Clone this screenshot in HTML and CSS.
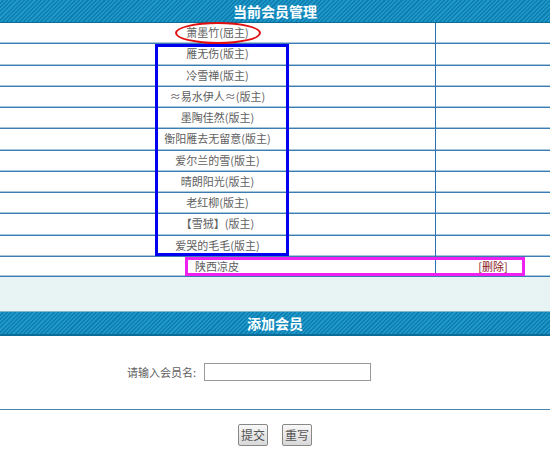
FILE: index.html
```html
<!DOCTYPE html>
<html lang="zh">
<head>
<meta charset="utf-8">
<title>当前会员管理</title>
<link rel="stylesheet" href="styles.css">
</head>
<body>
<div class="page">
  <div class="bar">当前会员管理</div>
  <div class="list">
    <div class="row"><div class="name">萧墨竹(屈主)</div><div class="op"></div></div>
    <div class="row"><div class="name">雁无伤(版主)</div><div class="op"></div></div>
    <div class="row"><div class="name">冷雪禅(版主)</div><div class="op"></div></div>
    <div class="row"><div class="name">≈易水伊人≈(版主)</div><div class="op"></div></div>
    <div class="row"><div class="name">墨陶佳然(版主)</div><div class="op"></div></div>
    <div class="row"><div class="name">衡阳雁去无留意(版主)</div><div class="op"></div></div>
    <div class="row"><div class="name">爱尔兰的雪(版主)</div><div class="op"></div></div>
    <div class="row"><div class="name">晴朗阳光(版主)</div><div class="op"></div></div>
    <div class="row"><div class="name">老红柳(版主)</div><div class="op"></div></div>
    <div class="row"><div class="name">【雪狨】(版主)</div><div class="op"></div></div>
    <div class="row"><div class="name">爱哭的毛毛(版主)</div><div class="op"></div></div>
    <div class="row last"><div class="name left">陕西凉皮</div><div class="op"><span class="del">[删除]</span></div></div>
  </div>
  <div class="spacer"></div>
  <div class="bar bar2">添加会员</div>
  <div class="form">
    <label class="lbl" for="m">请输入会员名:</label>
    <input class="field" id="m" type="text">
  </div>
  <div class="actions">
    <button class="btn" type="button">提交</button>
    <button class="btn" type="button">重写</button>
  </div>

  <div class="mark-red"></div>
  <div class="mark-blue"></div>
  <div class="mark-pink"></div>
</div>
</body>
</html>
```

FILE: styles.css
```css
* { box-sizing: border-box; }
html, body { margin: 0; padding: 0; background: #ffffff; }
body {
  font-family: "Noto Sans CJK SC", "Liberation Sans", sans-serif;
  font-size: 11px;
  color: #606060;
}
.page { position: relative; width: 550px; height: 457px; overflow: hidden; }

.bar {
  height: 23px;
  line-height: 22px;
  text-align: center;
  color: #fff;
  font-weight: bold;
  font-size: 14px;
  background: repeating-linear-gradient(135deg, #1f98c9 0 1.5px, #0d7fb1 1.5px 3px);
  border-bottom: 1px solid #0b6c96;
}
.bar2 {
  height: 25px;
  line-height: 22px;
  border-top: 1px solid #7fb4cc;
  border-bottom: 2px solid #0b6c96;
}

.row {
  display: grid;
  grid-template-columns: 436px 1fr;
  height: 21.25px;
  border-bottom: 1px solid #3b7db3;
  box-shadow: inset 0 -1px 0 #a9c7dc;
}
.row.last { height: 20px; }
.name {
  border-right: 1px solid #2a6fb0;
  text-align: center;
  line-height: 19px;
  white-space: nowrap;
}
.name.left { text-align: left; padding-left: 195px; }
.op { text-align: center; line-height: 19px; }
.del { color: #8a1c1c; font-size: 11px; }

.spacer {
  height: 34px;
  background: #e8f3f3;
}

.form {
  height: 74px;
  display: flex;
  align-items: center;
  padding-left: 127px;
  gap: 8px;
  border-bottom: 1px solid #4a84ad;
}
.lbl { color: #606060; }
.field {
  width: 167px;
  height: 18px;
  border: 1px solid #999;
  background: #fff;
  padding: 0;
}

.actions {
  display: flex;
  justify-content: center;
  gap: 14px;
  padding-top: 14px;
}
.btn {
  width: 30px;
  height: 22px;
  padding: 0;
  font-family: "Noto Sans CJK SC", sans-serif;
  font-size: 12px;
  color: #555;
  border: 1px solid #888;
  border-radius: 2px;
  background: linear-gradient(#f8f8f8, #d8d8d8);
}

.mark-red {
  position: absolute;
  left: 175px; top: 22px;
  width: 86px; height: 22px;
  border: 2.5px solid #e01010;
  border-radius: 50%;
}
.mark-blue {
  position: absolute;
  left: 155px; top: 44px;
  width: 134px; height: 212px;
  border: 3px solid #0000f0;
}
.mark-pink {
  position: absolute;
  left: 185px; top: 257px;
  width: 340px; height: 19px;
  border: 3px solid #f020f0;
}
```
